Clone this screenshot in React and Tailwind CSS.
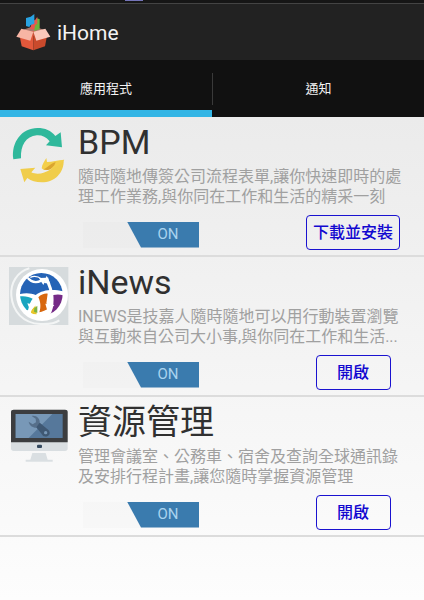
import { useState } from "react";

const APPS = [
	{
		id: "bpm",
		name: "BPM",
		desc: "隨時隨地傳簽公司流程表單,讓你快速即時的處理工作業務,與你同在工作和生活的精采一刻",
		action: "下載並安裝",
		Icon: SyncIcon,
	},
	{
		id: "inews",
		name: "iNews",
		desc: "INEWS是技嘉人隨時隨地可以用行動裝置瀏覽與互動來自公司大小事,與你同在工作和生活...",
		action: "開啟",
		Icon: GlobeIcon,
	},
	{
		id: "resource",
		name: "資源管理",
		desc: "管理會議室、公務車、宿舍及查詢全球通訊錄及安排行程計畫,讓您隨時掌握資源管理",
		action: "開啟",
		Icon: MonitorIcon,
	},
];

const TABS = ["應用程式", "通知"];

function BoxLogo() {
	return (
		<svg viewBox="45 36 108 114" className="h-[38px] w-9" aria-hidden="true">
			<path d="M65 88 100 76 136 88 100 106Z" fill="#a9776c" />
			<path d="M103 58 108 59 112 52 119 55 119 84 103 90Z" fill="#6db53c" />
			<path d="M90 84 96 62 106 56 112 47V68L106 72 102 86Z" fill="#e8584f" />
			<path d="M78 51 92 47 103 39V68L92 72 88 78 78 75Z" fill="#29a3e2" />
			<path d="M58 100 100 90 100 148 65 136Z" fill="#e2583b" />
			<path d="M142 100 100 90 100 148 135 136Z" fill="#c94a2c" />
			<path d="M64 83 100 92 91 119 49 107Z" fill="#f7b5a4" />
			<path d="M136 83 100 92 109 119 151 107Z" fill="#fac8ba" />
		</svg>
	);
}

function SyncIcon() {
	return (
		<svg viewBox="27 30 180 180" className="size-[60px] shrink-0" aria-hidden="true">
			<path
				d="M40 130C33 78 66 36 112 36C136 36 153 44 166 60L182 49 186 94 138 88 149 76C138 62 125 57 110 58C78 61 61 87 63 127Z"
				fill="#2fb89b"
			/>
			<path
				d="M61 159 106 155 94 169C112 178 135 171 150 161L191 131C193 170 164 199 125 199C107 199 94 195 82 186L73 199Z"
				fill="#f0cd4b"
			/>
			<path
				d="M125 157C126 145 133 136 139 126L141 138C156 137 174 132 193 131C180 148 157 162 132 162Z"
				fill="#f3cf4b"
			/>
			<path d="M131 160C144 154 151 143 167 138L163 148 151 160C144 163 137 162 131 160Z" fill="#dba52f" />
		</svg>
	);
}

function GlobeIcon() {
	return (
		<svg viewBox="27 33 180 180" className="size-[60px] shrink-0" aria-hidden="true">
			<defs>
				<clipPath id="globe">
					<circle cx="124" cy="118" r="64" />
				</clipPath>
			</defs>
			<rect x="27" y="36" width="178" height="174" fill="#d6dbdd" />
			<path
				d="M88 40C51 51 31 84 34 122C38 168 68 205 121 207C146 208 165 205 178 196"
				fill="none"
				stroke="#f3f5f5"
				strokeWidth="6"
			/>
			<circle cx="126" cy="120" r="78" fill="#fff" />
			<g clipPath="url(#globe)">
				<path d="M55 50H195V110C168 103 132 100 107 120C94 114 76 112 55 118Z" fill="#2563b6" />
				<path d="M55 125C72 121 87 125 98 131C91 139 88 150 84 166H55Z" fill="#19a5bf" />
				<path d="M93 170C96 162 101 156 106 151L110 178H93Z" fill="#e8c62b" />
				<path d="M103 160 112 152V174L102 170Z" fill="#7cb342" />
				<path d="M115 127C123 118 134 115 143 116L139 145 149 158C137 166 127 170 118 172C124 155 121 139 115 127Z" fill="#d8680f" />
				<path d="M160 120C172 117 182 118 194 122V184H148C160 166 162 144 160 120Z" fill="#752b87" />
				<path
					d="M81 66C94 83 110 84 124 77"
					fill="none"
					stroke="#fff"
					strokeWidth="7"
				/>
				<path
					d="M91 67C102 62 114 64 125 72"
					fill="none"
					stroke="#fff"
					strokeWidth="4"
				/>
				<path
					d="M140 68C143 87 158 102 154 128C153 138 151 144 149 150"
					fill="none"
					stroke="#fff"
					strokeWidth="9"
				/>
			</g>
			<path d="M117 69 140 68 130 90 124 81Z" fill="#fff" />
			<path d="M132 84 140 62 151 86Z" fill="#fff" />
			<path d="M82 145 108 150 91 168Z" fill="#fff" />
			<path d="M136 146 163 150 144 174Z" fill="#fff" />
		</svg>
	);
}

function MonitorIcon() {
	return (
		<svg viewBox="27 33 180 180" className="size-[60px] shrink-0" aria-hidden="true">
			<path d="M97 174H137L143 194H158V200H77V194H91Z" fill="#dadfe2" />
			<rect x="33" y="44" width="170" height="124" rx="8" fill="#d9dee1" />
			<path d="M33 142V51Q33 44 41 44H195Q203 44 203 51V142Z" fill="#3c3d3f" />
			<rect x="47" y="57" width="141" height="72" fill="#56789b" />
			<path d="M47 57H157L86 129H47Z" fill="#7898b7" />
			<path
				d="M95 63C109 60 121 72 119 84L145 105C151 111 150 120 143 123C136 127 129 124 126 118L110 98C99 99 88 92 86 80L98 88 108 82 107 71Z"
				fill="#566f8a"
			/>
			<path d="M119 83 145 105C151 111 150 120 143 123C136 127 129 124 126 118L109 97Z" fill="#3f5873" />
			<circle cx="137" cy="113" r="5" fill="#7898b7" />
			<rect x="111" y="149" width="15" height="10" rx="3" fill="#34495e" />
		</svg>
	);
}

function Toggle({ label, checked, onChange }) {
	return (
		<label className="mt-1 grid h-[26px] w-[116px] cursor-pointer bg-black/[0.01]">
			<input
				type="checkbox"
				aria-label={label}
				checked={checked}
				onChange={onChange}
				className="col-start-1 row-start-1 size-full cursor-pointer appearance-none"
			/>
			<span
				className={`col-start-1 row-start-1 flex w-[72px] items-center justify-center text-[15px] ${checked ? "justify-self-end bg-[#3a7bae] pl-[10px] text-[#a9d3ee] [clip-path:polygon(0_0,100%_0,100%_100%,14px_100%)]" : "justify-self-start bg-gray-400 pr-[10px] text-white [clip-path:polygon(0_0,100%_0,58px_100%,0_100%)]"}`}
			>
				{checked ? "ON" : "OFF"}
			</span>
		</label>
	);
}

function AppRow({ app, enabled, onToggle }) {
	const { Icon } = app;

	return (
		<li className="flex gap-[9px] border-b-2 border-[#dcdcdc] pt-[5px] pr-3 pb-[5px] pl-[9px]">
			<div className="pt-1">
				<Icon />
			</div>
			<div className="min-w-0 flex-1">
				<h2 className="h-[45px] text-[34px] leading-10 text-[#303030]">
					{app.name}
				</h2>
				<p className="pr-2 text-base leading-5 text-[#a0a0a0]">
					{app.desc}
				</p>
				<div className="mt-2 flex items-center justify-between pl-[5px]">
					<Toggle
						label={app.name}
						checked={enabled}
						onChange={onToggle}
					/>
					<div className="flex w-[118px] justify-center">
						<button
							type="button"
							className="h-[35px] min-w-[75px] rounded border border-[#1a12d0] px-[6px] text-base font-medium whitespace-nowrap text-[#1208d0]"
						>
							{app.action}
						</button>
					</div>
				</div>
			</div>
		</li>
	);
}

export default function App() {
	const [activeTab, setActiveTab] = useState(0);
	const [enabled, setEnabled] = useState({
		bpm: true,
		inews: true,
		resource: true,
	});

	const toggleApp = (id) =>
		setEnabled((prev) => ({ ...prev, [id]: !prev[id] }));

	return (
		<div
			lang="zh-Hant"
			className="flex min-h-screen flex-col bg-[#111] font-[Roboto,'Noto_Sans_CJK_TC',sans-serif]"
		>
			<div className="h-[3px] bg-[#161616] pl-[125px]">
				<div className="h-px w-[18px] bg-[#7474b8]" />
			</div>
			<header className="flex h-[57px] items-center gap-[6px] border-t border-[#444] bg-[#222] px-[15px]">
				<BoxLogo />
				<h1 className="pt-[3px] text-[21px] text-[#f3f3f3]">iHome</h1>
			</header>
			<nav className="flex h-[57px] items-center bg-[#111]">
				{TABS.map((tab, i) => (
					<button
						key={tab}
						type="button"
						onClick={() => setActiveTab(i)}
						className={`flex h-full flex-1 flex-col border-b-[7px] pt-[13px] text-[13px] text-[#f3f3f3] ${activeTab === i ? "border-[#33b5e5]" : "border-transparent"}`}
					>
						<span
							className={`flex h-8 w-full items-center justify-center ${i > 0 ? "border-l border-[#3a3a3a]" : ""}`}
						>
							{tab}
						</span>
					</button>
				))}
			</nav>
			<main className="flex-1 bg-linear-to-b from-[#ebebeb] to-[#fdfdfd]">
				{activeTab === 0 && (
					<ul>
						{APPS.map((app) => (
							<AppRow
								key={app.id}
								app={app}
								enabled={enabled[app.id]}
								onToggle={() => toggleApp(app.id)}
							/>
						))}
					</ul>
				)}
			</main>
		</div>
	);
}
